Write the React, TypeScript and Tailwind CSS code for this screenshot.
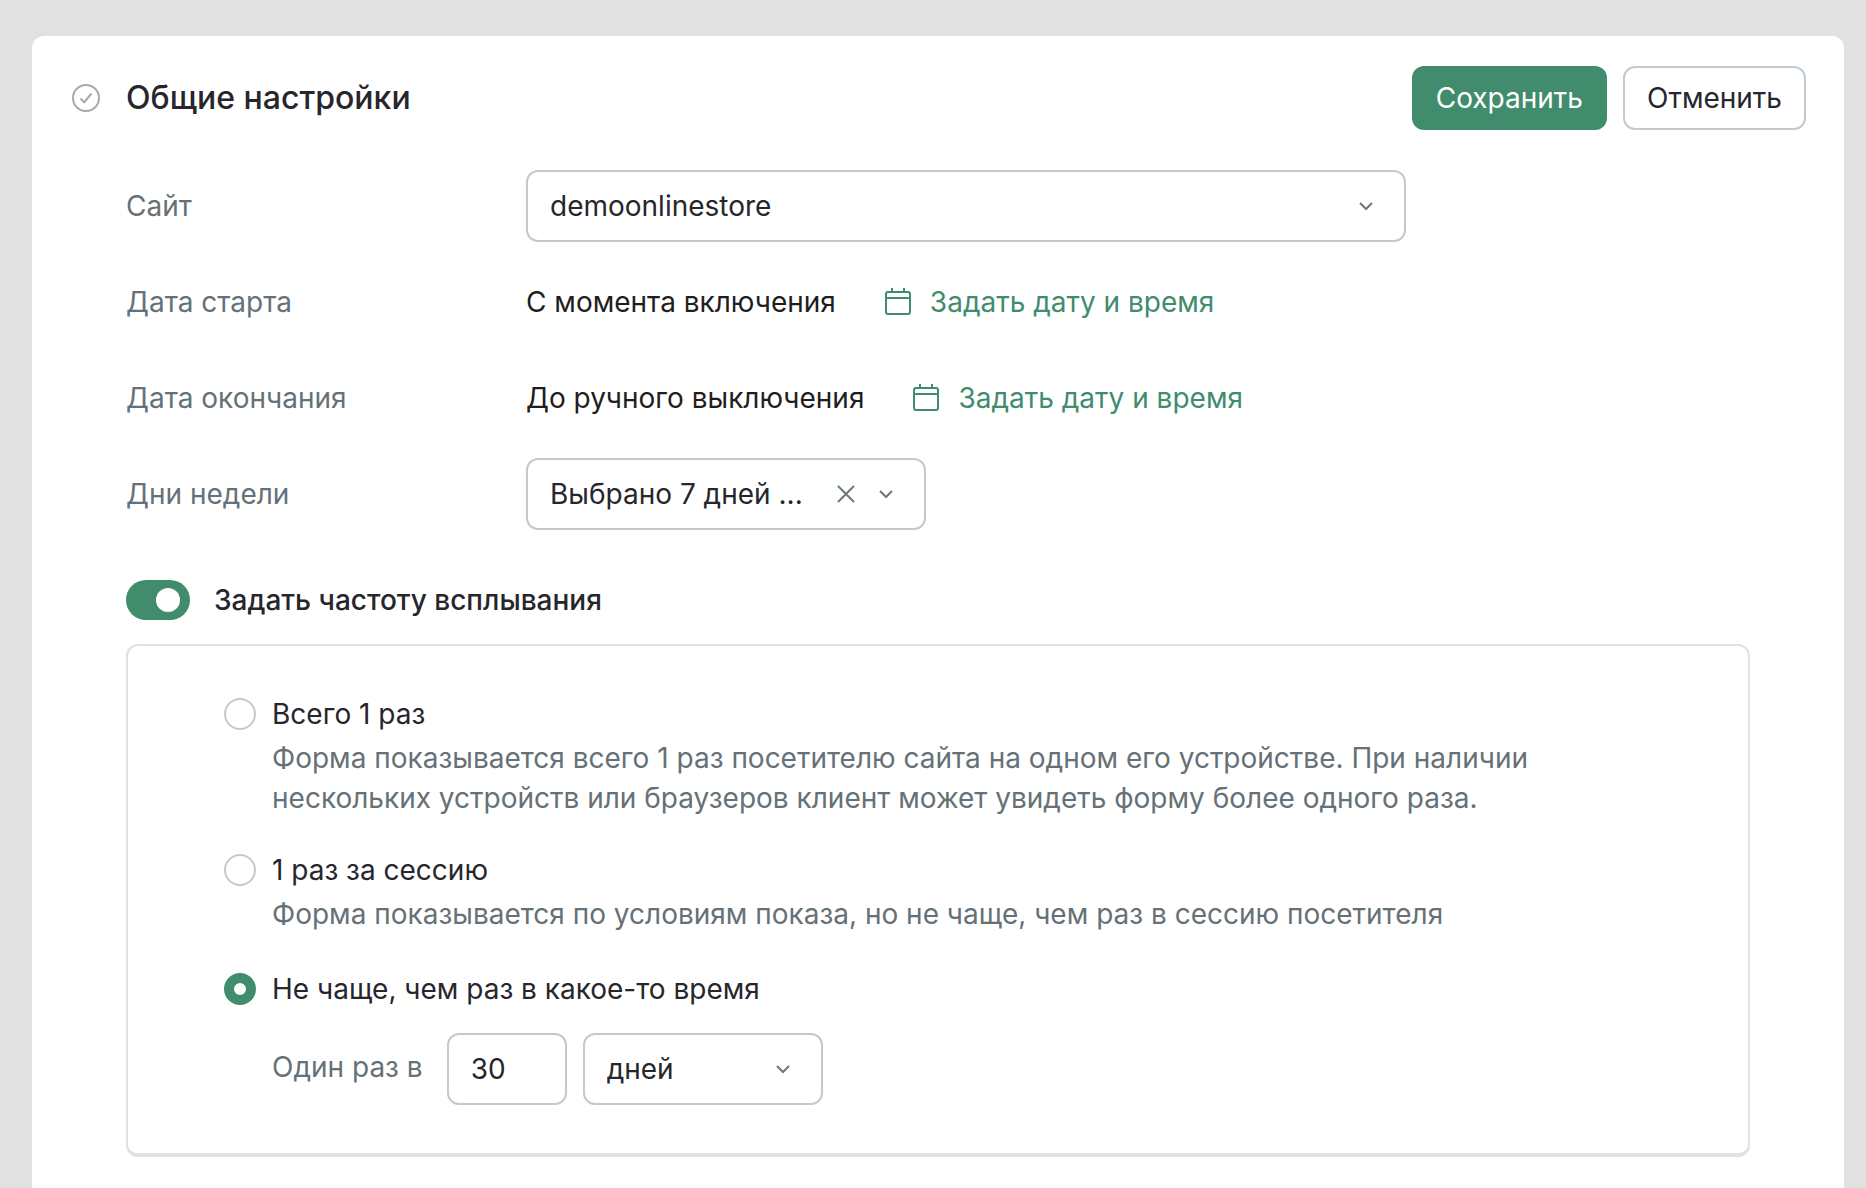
import { useState } from "react";
import type { ReactNode } from "react";

const fieldBox =
  "h-[72px] rounded-xl border-2 border-[#c0cad2] bg-white text-[28px] leading-10 text-[#26262c] outline-none";

function Chevron() {
  return (
    <svg
      className="pointer-events-none absolute top-7 right-8 size-4 text-[#6b7880]"
      viewBox="0 0 16 16"
      fill="none"
      stroke="currentColor"
      strokeWidth="2"
      aria-hidden="true"
    >
      <path d="M2 5 8 11 14 5" />
    </svg>
  );
}

function CalendarIcon() {
  return (
    <svg className="size-7 shrink-0" viewBox="0 0 28 28" fill="none" stroke="currentColor" strokeWidth="2" aria-hidden="true">
      <rect x="2" y="4" width="24" height="22" rx="2" />
      <path d="M2 10h24M8 4V0M20 4V0" />
    </svg>
  );
}

function Row({ label, htmlFor, children }: { label: string; htmlFor?: string; children: ReactNode }) {
  return (
    <div className="flex min-h-[72px] items-center">
      {htmlFor ? (
        <label htmlFor={htmlFor} className="w-[400px] shrink-0 text-[#667177]">
          {label}
        </label>
      ) : (
        <span className="w-[400px] shrink-0 text-[#667177]">{label}</span>
      )}
      {children}
    </div>
  );
}

function DateRow({ label, value }: { label: string; value: string }) {
  return (
    <Row label={label}>
      <span className="text-[#1e1e1e]">{value}</span>
      <button type="button" className="ml-12 flex items-center gap-[18px] text-[#408c6c]">
        <CalendarIcon />
        Задать дату и время
      </button>
    </Row>
  );
}

function Option({
  id,
  title,
  checked,
  onSelect,
  children,
}: {
  id: string;
  title: string;
  checked: boolean;
  onSelect: () => void;
  children: ReactNode;
}) {
  return (
    <div>
      <div className="flex items-center gap-4">
        <input
          type="radio"
          name="frequency"
          id={id}
          checked={checked}
          onChange={onSelect}
          className="size-8 shrink-0 appearance-none rounded-full border-2 border-[#c0cad2] bg-white checked:border-[10px] checked:border-[#408c6c]"
        />
        <label htmlFor={id} className="text-[#26262c]">
          {title}
        </label>
      </div>
      <div className="pl-12 text-[#667177]">{children}</div>
    </div>
  );
}

export default function App() {
  const [enabled, setEnabled] = useState(true);
  const [option, setOption] = useState("interval");
  const [count, setCount] = useState("30");

  return (
    <div className="min-h-screen bg-[#e1e1e1] pt-9 pr-[22px] pl-8 font-['Inter',sans-serif] text-[28px] leading-10 antialiased">
      <main className="min-h-[calc(100vh-36px)] rounded-t-xl bg-white pt-[30px] pb-6 ring-1 ring-[#dce2e6]">
        <header className="flex items-center pr-[38px] pl-10">
          <svg className="size-7 shrink-0 text-[#a9a9a9]" viewBox="0 0 28 28" fill="none" stroke="currentColor" strokeWidth="2" aria-hidden="true">
            <circle cx="14" cy="14" r="13" />
            <path d="m8.500 14.500 3.700 3.700 7.300-8.700" />
          </svg>
          <h1 className="ml-[26px] flex-1 text-[32px] font-medium text-[#26262c]">Общие настройки</h1>
          <div className="flex gap-4">
            <button type="button" className="h-16 rounded-xl bg-[#408c6c] px-6 text-white">
              Сохранить
            </button>
            <button type="button" className="h-16 rounded-xl border-2 border-[#c0cad2] px-[22px] text-[#26262c]">
              Отменить
            </button>
          </div>
        </header>

        <div className="mt-10 px-[94px]">
          <div className="flex flex-col gap-6">
            <Row label="Сайт" htmlFor="site">
              <div className="relative w-[880px]">
                <select id="site" className={`${fieldBox} w-full appearance-none pr-16 pl-[22px]`}>
                  <option>demoonlinestore</option>
                </select>
                <Chevron />
              </div>
            </Row>
            <DateRow label="Дата старта" value="С момента включения" />
            <DateRow label="Дата окончания" value="До ручного выключения" />
            <Row label="Дни недели" htmlFor="days">
              <div className="relative w-[400px]">
                <select id="days" className={`${fieldBox} w-full appearance-none pr-16 pl-[22px]`}>
                  <option>Выбрано 7 дней ...</option>
                </select>
                <button type="button" aria-label="Очистить" className="absolute top-[26px] right-[70px] size-5 text-[#6b7880]">
                  <svg className="size-5" viewBox="0 0 20 20" fill="none" stroke="currentColor" strokeWidth="2" aria-hidden="true">
                    <path d="m2 2 16 16M18 2 2 18" />
                  </svg>
                </button>
                <Chevron />
              </div>
            </Row>
          </div>

          <div className="mt-[50px] flex items-center gap-6">
            <input
              type="checkbox"
              role="switch"
              id="frequency-toggle"
              checked={enabled}
              onChange={(e) => setEnabled(e.target.checked)}
              className="flex h-10 w-16 shrink-0 appearance-none items-center rounded-full bg-[#c0cad2] px-2.5 before:size-6 before:rounded-full before:bg-white checked:justify-end checked:bg-[#408c6c]"
            />
            <label htmlFor="frequency-toggle" className="font-medium text-[#26262c]">
              Задать частоту всплывания
            </label>
          </div>

          <section className="mt-6 rounded-xl border-2 border-b-4 border-[#dce2e6] py-12 pr-[140px] pl-24">
            <Option
              id="once"
              title="Всего 1 раз"
              checked={option === "once"}
              onSelect={() => setOption("once")}
            >
              <p className="mt-1">
                Форма показывается всего 1 раз посетителю сайта на одном его устройстве. При наличии нескольких
                устройств или браузеров клиент может увидеть форму более одного раза.
              </p>
            </Option>
            <div className="mt-8">
              <Option
                id="session"
                title="1 раз за сессию"
                checked={option === "session"}
                onSelect={() => setOption("session")}
              >
                <p className="mt-1">Форма показывается по условиям показа, но не чаще, чем раз в сессию посетителя</p>
              </Option>
            </div>
            <div className="mt-[35px]">
              <Option
                id="interval"
                title="Не чаще, чем раз в какое-то время"
                checked={option === "interval"}
                onSelect={() => setOption("interval")}
              >
                <div className="mt-6 flex items-center">
                  <label htmlFor="count" className="mr-6 pb-1">
                    Один раз в
                  </label>
                  <input
                    id="count"
                    type="text"
                    inputMode="numeric"
                    value={count}
                    onChange={(e) => setCount(e.target.value)}
                    className={`${fieldBox} w-[120px] px-[22px]`}
                  />
                  <div className="relative ml-4 w-[240px]">
                    <select aria-label="Единица времени" className={`${fieldBox} w-full appearance-none pr-16 pl-[22px]`}>
                      <option>дней</option>
                    </select>
                    <Chevron />
                  </div>
                </div>
              </Option>
            </div>
          </section>
        </div>
      </main>
    </div>
  );
}
